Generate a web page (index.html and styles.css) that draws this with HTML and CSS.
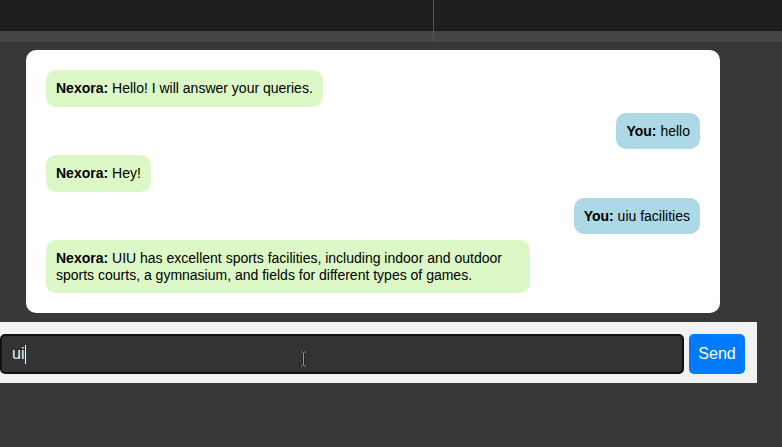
FILE: index.html
```html
<!DOCTYPE html>
<html>
<head>
<meta charset="utf-8">
<link rel="stylesheet" href="styles.css">
</head>
<body>
<div class="top">
  <div class="pane pane-left"><div class="bar"></div><div class="strip"></div></div>
  <div class="divider"></div>
  <div class="pane pane-right"><div class="bar"></div><div class="strip"></div></div>
</div>
<div class="main">
  <div class="card">
    <div class="msg bot"><b>Nexora:</b> Hello! I will answer your queries.</div>
    <div class="msg user"><b>You:</b> hello</div>
    <div class="msg bot"><b>Nexora:</b> Hey!</div>
    <div class="msg user"><b>You:</b> uiu facilities</div>
    <div class="msg bot wide"><b>Nexora:</b> UIU has excellent sports facilities, including indoor and outdoor sports courts, a gymnasium, and fields for different types of games.</div>
  </div>
</div>
<div class="inputbar">
  <div class="input"><span class="typed">ui</span><span class="caret"></span>
    <svg class="ibeam" width="9" height="16" viewBox="0 0 9 16"><path d="M1 1h3M5 1h3M4.5 1.5v13M1 15h3M5 15h3" stroke="#1a1a1a" stroke-width="2.2" fill="none" stroke-linecap="round"/><path d="M1.5 1h2.5M5 1h2.5M4.5 1.5v13M1.5 15h2.5M5 15h2.5" stroke="#9a9a9a" stroke-width="1" fill="none"/></svg>
  </div>
  <button class="send">Send</button>
</div>
</body>
</html>
```
FILE: styles.css
```css
html, body {
  margin: 0;
  padding: 0;
}
body {
  background: #383838;
  font-family: "Liberation Sans", Arial, sans-serif;
  width: 782px;
  height: 447px;
  overflow: hidden;
}
.top {
  display: flex;
  height: 42px;
}
.pane {
  display: flex;
  flex-direction: column;
}
.pane-left { width: 433px; }
.pane-right { flex: 1; }
.bar {
  height: 30px;
  background: #1f1f1f;
  border-bottom: 1px solid #191919;
}
.strip {
  flex: 1;
  background: #454545;
}
.divider {
  width: 1px;
  background: #555555;
}
.main {
  padding: 8px 0 0 26px;
}
.card {
  width: 694px;
  box-sizing: border-box;
  background: #ffffff;
  border-radius: 10px;
  padding: 20px;
  display: flex;
  flex-direction: column;
  gap: 6px;
}
.msg {
  font-size: 14px;
  line-height: 16.5px;
  color: #000;
  padding: 10px;
  border-radius: 10px;
  width: fit-content;
  max-width: 484px;
  box-sizing: border-box;
}
.msg b { font-weight: bold; }
.bot {
  background: #dcf8c6;
  align-self: flex-start;
}
.user {
  background: #add8e6;
  align-self: flex-end;
}
.wide { width: 484px; }
.inputbar {
  margin-top: 9px;
  width: 757px;
  height: 61px;
  box-sizing: border-box;
  background: #f2f2f2;
  padding: 12px 12px 9px 0;
  display: flex;
  gap: 5px;
}
.input {
  position: relative;
  width: 684px;
  height: 40px;
  box-sizing: border-box;
  background: #333333;
  border: 2px solid #111111;
  border-radius: 5px;
  padding: 0 10px;
  display: flex;
  align-items: center;
  font-size: 16px;
  color: #f0f0f0;
}
.caret {
  display: inline-block;
  width: 1px;
  height: 19px;
  background: #ffffff;
  margin-left: 1px;
}
.ibeam {
  position: absolute;
  left: 297px;
  top: 15px;
}
.send {
  width: 56px;
  height: 40px;
  background: #007bff;
  color: #ffffff;
  border: none;
  border-radius: 5px;
  font-family: "Liberation Sans", Arial, sans-serif;
  font-size: 16px;
  padding: 0;
}
```
